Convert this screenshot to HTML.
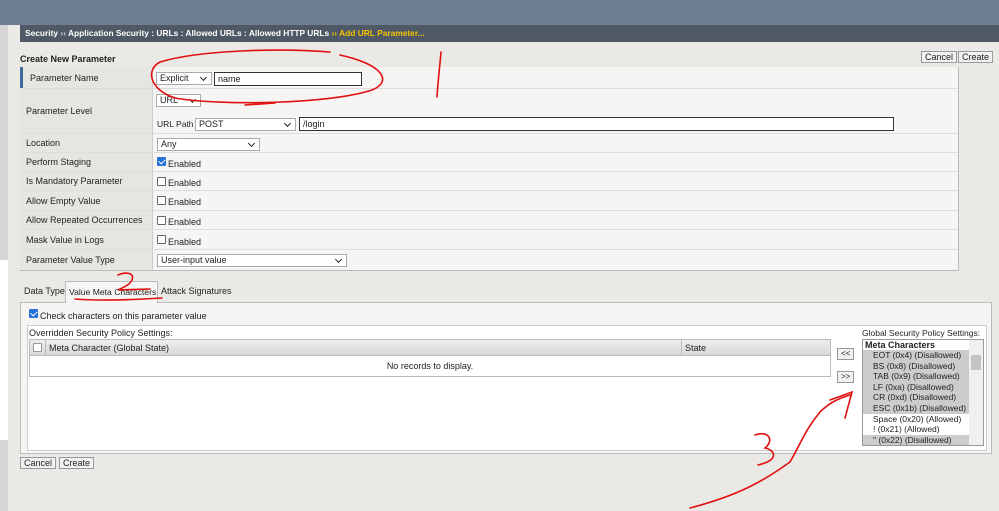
<!DOCTYPE html><html><head><style>
*{box-sizing:border-box;white-space:nowrap}body{margin:0;width:999px;height:511px;overflow:hidden;background:#ebe9e5;font-family:"Liberation Sans",Arial,sans-serif;font-size:9px;color:#222;position:relative}
.a{position:absolute}
.sel{position:absolute;background:#fff;border:1px solid #aaa;height:13px;padding:0 3px;line-height:11px;font-size:9px}
.sel:after{content:"";position:absolute;right:5px;top:2px;width:4px;height:4px;border-right:1.3px solid #222;border-bottom:1.3px solid #222;transform:rotate(45deg)}
.inp{position:absolute;background:#fff;border:1px solid #333;height:14px;padding:0 3px;line-height:12px;font-size:9px}
.row{position:absolute;left:20px;width:938px;border-bottom:1px solid #ddd;background:#f6f5f3}
.lab{position:absolute;left:0;top:0;bottom:0;width:133px;background:#e6e5e2;border-right:1px solid #ccc;padding-left:6px;display:flex;align-items:center}
.cb{position:absolute;width:9px;height:9px;border:1px solid #666;background:#fff;border-radius:1px}
.cbk{background:#2a72d8;border-color:#2a72d8}
.cbk:after{content:"";position:absolute;left:2px;top:0;width:3px;height:5px;border-right:1.5px solid #fff;border-bottom:1.5px solid #fff;transform:rotate(45deg)}
.btn{position:absolute;background:#f1f1f1;border:1px solid #999;height:12px;line-height:10px;padding:0 3px;font-size:9px}
.li{height:10.6px;line-height:10.6px;padding-left:10px;background:#ccc;font-size:8.5px}
</style></head><body>
<div class="a" style="left:0;top:0;width:999px;height:25px;background:#6f7e90"></div>
<div class="a" style="left:20px;top:25px;width:979px;height:17px;background:#4e5965;color:#fff;font-weight:bold;line-height:17px;padding-left:5px;font-size:8.4px">Security <span style="color:#ccc">››</span> Application Security : URLs : Allowed URLs : Allowed HTTP URLs <span style="color:#f4c300">›› Add URL Parameter...</span></div>
<div class="a" style="left:0;top:25px;width:8px;height:486px;background:#d5d5d5"></div>
<div class="a" style="left:0;top:260px;width:8px;height:180px;background:#fff"></div>
<div class="a" style="left:8px;top:42px;width:12px;height:469px;background:#ebe9e5"></div>
<div class="a" style="left:20px;top:54px;font-weight:bold">Create New Parameter</div>
<div class="btn" style="left:921px;top:51px">Cancel</div><div class="btn" style="left:958px;top:51px">Create</div>
<div class="a" style="left:20px;top:67px;width:939px;height:204px;border:1px solid #bbb;border-top:none;background:#f6f5f3"></div>
<div class="row" style="top:67px;height:22px"><div class="lab" style="border-left:3px solid #3d6a9a;padding-left:7px">Parameter Name</div></div>
<div class="sel" style="left:156px;top:72px;width:56px">Explicit</div><div class="inp" style="left:214px;top:72px;width:148px">name</div>
<div class="row" style="top:89px;height:45px"><div class="lab">Parameter Level</div></div>
<div class="sel" style="left:156px;top:94px;width:45px">URL</div>
<div class="a" style="left:157px;top:119px;font-size:8.5px">URL Path</div><div class="sel" style="left:195px;top:118px;width:101px">POST</div><div class="inp" style="left:299px;top:117px;width:595px">/login</div>
<div class="row" style="top:134px;height:19px"><div class="lab">Location</div></div><div class="sel" style="left:157px;top:138px;width:103px">Any</div>
<div class="row" style="top:153px;height:19px"><div class="lab">Perform Staging</div></div><div class="cb cbk" style="left:157px;top:157px"></div><div class="a" style="left:168px;top:159px">Enabled</div>
<div class="row" style="top:172px;height:19px"><div class="lab">Is Mandatory Parameter</div></div><div class="cb" style="left:157px;top:177px"></div><div class="a" style="left:168px;top:178px">Enabled</div>
<div class="row" style="top:191px;height:20px"><div class="lab">Allow Empty Value</div></div><div class="cb" style="left:157px;top:196px"></div><div class="a" style="left:168px;top:197px">Enabled</div>
<div class="row" style="top:211px;height:19px"><div class="lab">Allow Repeated Occurrences</div></div><div class="cb" style="left:157px;top:216px"></div><div class="a" style="left:168px;top:217px">Enabled</div>
<div class="row" style="top:230px;height:20px"><div class="lab">Mask Value in Logs</div></div><div class="cb" style="left:157px;top:235px"></div><div class="a" style="left:168px;top:237px">Enabled</div>
<div class="row" style="top:250px;height:20px;border-bottom:none"><div class="lab">Parameter Value Type</div></div><div class="sel" style="left:157px;top:254px;width:190px">User-input value</div>
<div class="a" style="left:24px;top:286px">Data Type</div>
<div class="a" style="left:65px;top:281px;width:93px;height:22px;border:1px solid #bbb;border-bottom:none;background:#f6f5f3;padding:5px 0 0 3px;z-index:1;font-size:8.6px">Value Meta Characters</div>
<div class="a" style="left:161px;top:286px">Attack Signatures</div>
<div class="a" style="left:20px;top:302px;width:972px;height:152px;border:1px solid #bbb;background:#f6f5f3"></div>
<div class="cb cbk" style="left:29px;top:309px"></div><div class="a" style="left:40px;top:311px">Check characters on this parameter value</div>
<div class="a" style="left:27px;top:325px;width:960px;height:126px;border:1px solid #ccc;background:#fff"></div>
<div class="a" style="left:29px;top:328px">Overridden Security Policy Settings:</div>
<div class="a" style="left:29px;top:339px;width:802px;height:38px;border:1px solid #bbb;background:#fff"></div>
<div class="a" style="left:30px;top:340px;width:800px;height:16px;background:linear-gradient(#eee,#d8d8d8);border-bottom:1px solid #bbb"></div>
<div class="a" style="left:45px;top:340px;width:1px;height:16px;background:#bbb"></div><div class="a" style="left:681px;top:340px;width:1px;height:16px;background:#bbb"></div>
<div class="cb" style="left:33px;top:343px;border-color:#999"></div>
<div class="a" style="left:49px;top:343px">Meta Character (Global State)</div><div class="a" style="left:685px;top:343px">State</div>
<div class="a" style="left:30px;top:361px;width:800px;text-align:center">No records to display.</div>
<div class="btn" style="left:837px;top:348px;font-size:8px">&lt;&lt;</div><div class="btn" style="left:837px;top:371px;font-size:8px">&gt;&gt;</div>
<div class="a" style="left:862px;top:328px;font-size:8.5px">Global Security Policy Settings:</div>
<div class="a" style="left:862px;top:339px;width:122px;height:107px;border:1px solid #999;background:#fff;overflow:hidden">
<div style="width:106px;overflow:hidden"><div style="font-weight:bold;line-height:10px;padding-left:2px">Meta Characters</div>
<div class="li">EOT (0x4) (Disallowed)</div><div class="li">BS (0x8) (Disallowed)</div><div class="li">TAB (0x9) (Disallowed)</div><div class="li">LF (0xa) (Disallowed)</div><div class="li">CR (0xd) (Disallowed)</div><div class="li">ESC (0x1b) (Disallowed)</div><div class="li" style="background:#fff">Space (0x20) (Allowed)</div><div class="li" style="background:#fff">! (0x21) (Allowed)</div><div class="li">" (0x22) (Disallowed)</div></div>
<div class="a" style="right:0;top:0;width:14px;height:105px;background:#f0f0f0"></div><div class="a" style="right:2px;top:15px;width:10px;height:15px;background:#c4c4c4"></div>
</div>
<div class="btn" style="left:20px;top:457px">Cancel</div><div class="btn" style="left:59px;top:457px">Create</div>
<svg class="a" style="left:0;top:0;z-index:2" width="999" height="511" fill="none" stroke="#e01010" stroke-width="1.6" stroke-linecap="round">
<path d="M330 52 C280 48 200 50 160 62 C145 70 150 90 175 98 C220 106 330 104 372 90 C392 82 385 65 340 55"/>
<path d="M245 105 L275 103"/>
<path d="M441 52 C440 65 438 80 437 97"/>
<path d="M118 275 C125 272 135 272 132 280 C130 285 122 288 118 290 L150 289"/>
<path d="M75 299 C100 301 130 300 162 298"/>
<path d="M755 435 C768 430 775 440 765 448 C775 450 780 460 758 465"/>
<path d="M690 508 C740 495 765 480 790 462 C800 445 805 430 820 412 C830 402 840 398 850 395 M830 400 L852 392 L845 418"/>
</svg>
</body></html>
